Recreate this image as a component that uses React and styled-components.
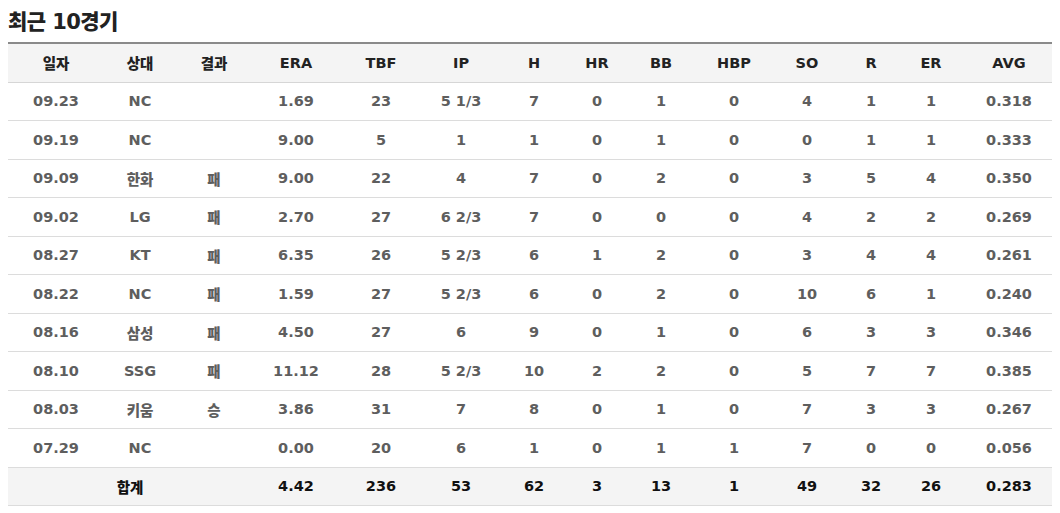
import styled, { createGlobalStyle } from 'styled-components'

const GlobalStyle = createGlobalStyle`
  body {
    margin: 8px;
    background: #fff;
    font-family: "DejaVu Sans", "Noto Sans CJK KR", sans-serif;
  }
`

const Title = styled.h2`
  margin: 0;
  height: 34px;
  font-size: 21px;
  line-height: 28px;
  font-weight: 900;
  color: #222;
  letter-spacing: -0.6px;
`

const Table = styled.table`
  width: 1048px;
  border-collapse: collapse;
  table-layout: fixed;
  border-top: 2px solid #8a8a8a;
  font-size: 14.5px;
  font-weight: 900;
  text-align: center;
`

const Th = styled.th`
  height: 37.5px;
  padding: 0;
  background: #f4f4f4;
  color: #222;
  font-weight: 900;
  border-bottom: 1px solid #d6d6d6;
`

const Td = styled.td`
  height: 37.5px;
  padding: 0;
  color: ${p => (p.$total ? '#111' : '#5e5e5e')};
  background: ${p => (p.$total ? '#f4f4f4' : '#fff')};
  border-bottom: 1px solid #dcdcdc;
`

const columns = [
  ['일자', 96], ['상대', 72], ['결과', 76], ['ERA', 88], ['TBF', 82], ['IP', 78],
  ['H', 68], ['HR', 58], ['BB', 70], ['HBP', 76], ['SO', 70], ['R', 58], ['ER', 62], ['AVG', 94],
]

const games = [
  ['09.23', 'NC', '', '1.69', '23', '5 1/3', '7', '0', '1', '0', '4', '1', '1', '0.318'],
  ['09.19', 'NC', '', '9.00', '5', '1', '1', '0', '1', '0', '0', '1', '1', '0.333'],
  ['09.09', '한화', '패', '9.00', '22', '4', '7', '0', '2', '0', '3', '5', '4', '0.350'],
  ['09.02', 'LG', '패', '2.70', '27', '6 2/3', '7', '0', '0', '0', '4', '2', '2', '0.269'],
  ['08.27', 'KT', '패', '6.35', '26', '5 2/3', '6', '1', '2', '0', '3', '4', '4', '0.261'],
  ['08.22', 'NC', '패', '1.59', '27', '5 2/3', '6', '0', '2', '0', '10', '6', '1', '0.240'],
  ['08.16', '삼성', '패', '4.50', '27', '6', '9', '0', '1', '0', '6', '3', '3', '0.346'],
  ['08.10', 'SSG', '패', '11.12', '28', '5 2/3', '10', '2', '2', '0', '5', '7', '7', '0.385'],
  ['08.03', '키움', '승', '3.86', '31', '7', '8', '0', '1', '0', '7', '3', '3', '0.267'],
  ['07.29', 'NC', '', '0.00', '20', '6', '1', '0', '1', '1', '7', '0', '0', '0.056'],
]

const total = ['4.42', '236', '53', '62', '3', '13', '1', '49', '32', '26', '0.283']

export default function App() {
  return (
    <>
      <GlobalStyle />
      <Title>최근 10경기</Title>
      <Table>
        <colgroup>
          {columns.map(([name, w]) => <col key={name} style={{ width: w }} />)}
        </colgroup>
        <thead>
          <tr>{columns.map(([name]) => <Th key={name}>{name}</Th>)}</tr>
        </thead>
        <tbody>
          {games.map(row => (
            <tr key={row[0]}>
              {row.map((v, i) => <Td key={i}>{v}</Td>)}
            </tr>
          ))}
          <tr>
            <Td $total colSpan={3}>합계</Td>
            {total.map((v, i) => <Td $total key={i}>{v}</Td>)}
          </tr>
        </tbody>
      </Table>
    </>
  )
}
